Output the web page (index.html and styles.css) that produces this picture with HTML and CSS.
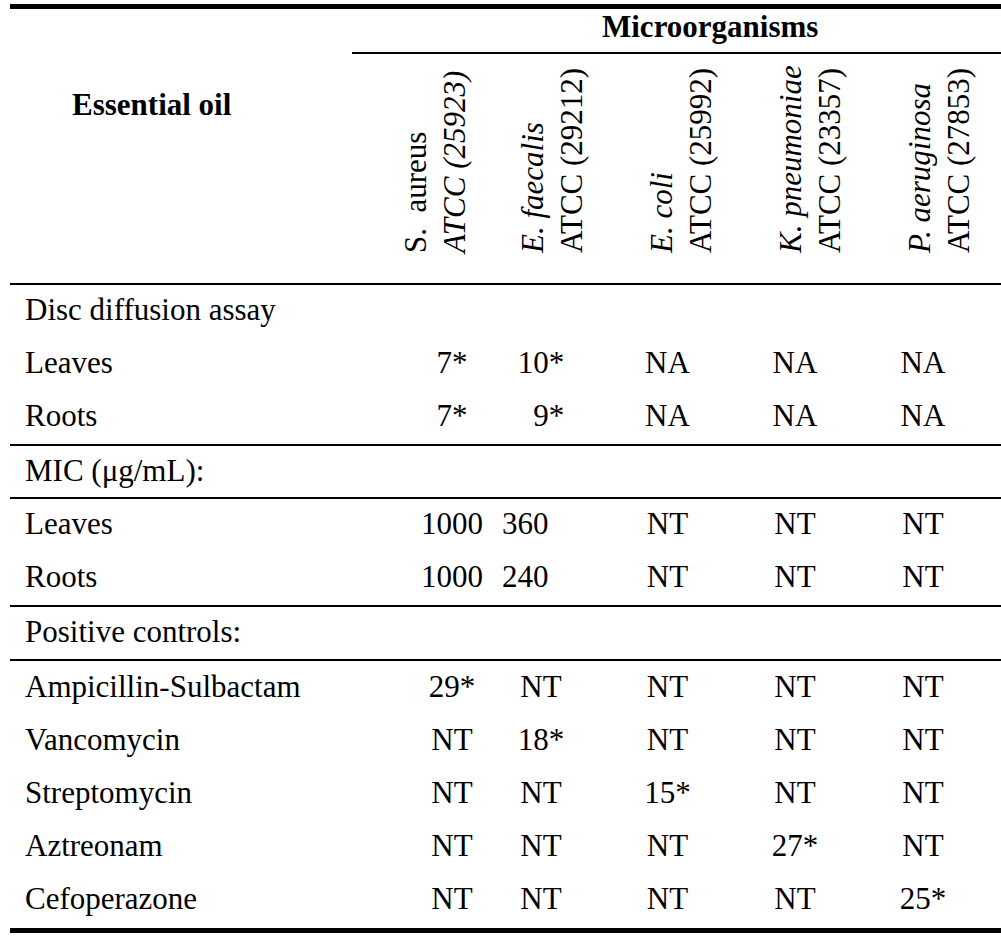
FILE: index.html
```html
<!DOCTYPE html>
<html>
<head>
<meta charset="utf-8">
<link rel="stylesheet" href="styles.css">
</head>
<body>
<div class="tbl">
  <div class="head">
    <div class="eo">Essential oil</div>
    <div class="micro">Microorganisms</div>
    <div class="orgs">
      <div class="org">S.&nbsp; aureus<br><i>ATCC (25923)</i></div>
      <div class="org"><i>E. faecalis</i><br>ATCC (29212)</div>
      <div class="org"><i>E. coli</i><br>ATCC (25992)</div>
      <div class="org"><i>K. pneumoniae</i><br>ATCC (23357)</div>
      <div class="org"><i>P. aeruginosa</i><br>ATCC (27853)</div>
    </div>
  </div>
  <div class="sec">
    <div class="row"><span class="lbl">Disc diffusion assay</span></div>
    <div class="row"><span class="lbl">Leaves</span><span class="c">7*</span><span class="c c2">10*</span><span class="c">NA</span><span class="c">NA</span><span class="c">NA</span></div>
    <div class="row"><span class="lbl">Roots</span><span class="c">7*</span><span class="c c2">&#8199;9*</span><span class="c">NA</span><span class="c">NA</span><span class="c">NA</span></div>
  </div>
  <div class="sec">
    <div class="row r51"><span class="lbl">MIC (μg/mL):</span></div>
  </div>
  <div class="sec">
    <div class="row"><span class="lbl">Leaves</span><span class="c">1000</span><span class="c c2 lft">360</span><span class="c">NT</span><span class="c">NT</span><span class="c">NT</span></div>
    <div class="row"><span class="lbl">Roots</span><span class="c">1000</span><span class="c c2 lft">240</span><span class="c">NT</span><span class="c">NT</span><span class="c">NT</span></div>
  </div>
  <div class="sec">
    <div class="row r52"><span class="lbl">Positive controls:</span></div>
  </div>
  <div class="sec last">
    <div class="row rl"><span class="lbl">Ampicillin-Sulbactam</span><span class="c">29*</span><span class="c c2">NT</span><span class="c">NT</span><span class="c">NT</span><span class="c">NT</span></div>
    <div class="row rl"><span class="lbl">Vancomycin</span><span class="c">NT</span><span class="c c2">18*</span><span class="c">NT</span><span class="c">NT</span><span class="c">NT</span></div>
    <div class="row rl"><span class="lbl">Streptomycin</span><span class="c">NT</span><span class="c c2">NT</span><span class="c">15*</span><span class="c">NT</span><span class="c">NT</span></div>
    <div class="row rl"><span class="lbl">Aztreonam</span><span class="c">NT</span><span class="c c2">NT</span><span class="c">NT</span><span class="c">27*</span><span class="c">NT</span></div>
    <div class="row rl"><span class="lbl">Cefoperazone</span><span class="c">NT</span><span class="c c2">NT</span><span class="c">NT</span><span class="c">NT</span><span class="c">25*</span></div>
  </div>
</div>
</body>
</html>
```
FILE: styles.css
```css
html, body {
  margin: 0;
  padding: 0;
  background: #fff;
}
body {
  font-family: "Liberation Serif", "Times New Roman", serif;
  font-size: 31px;
  color: #000;
}
.tbl {
  margin: 4px 0 0 10px;
  border-top: 5px solid #000;
}
.head {
  display: grid;
  grid-template-columns: 342px 1fr;
  border-bottom: 2px solid #000;
}
.eo {
  grid-column: 1;
  grid-row: 1 / span 2;
  font-weight: bold;
  line-height: 35px;
  padding: 78px 0 0 62px;
  white-space: nowrap;
}
.micro {
  grid-column: 2;
  grid-row: 1;
  font-weight: bold;
  line-height: 35px;
  padding: 0 0 8px 250px;
  border-bottom: 2px solid #000;
}
.orgs {
  grid-column: 2;
  grid-row: 2;
  display: flex;
  align-items: flex-end;
  height: 229px;
  box-sizing: border-box;
  padding: 0 0 30px 44px;
  gap: 51px;
}
.org {
  writing-mode: vertical-rl;
  transform: rotate(180deg);
  height: 196px;
  line-height: 39px;
  white-space: nowrap;
}
.org:first-child {
  margin-right: -12px;
}
.sec {
  border-bottom: 2px solid #000;
}
.sec.last {
  border-bottom-width: 5px;
  padding-bottom: 2px;
}
.row {
  display: grid;
  grid-template-columns: 398px 88px 108px 127px 128px 128px 1fr;
  line-height: 49px;
  padding-bottom: 4px;
}
.row.r51 {
  padding-bottom: 2px;
}
.row.r52 {
  padding-bottom: 3px;
}
.row.rl {
  padding-top: 1px;
  padding-bottom: 3px;
}
.lbl {
  grid-column: 1;
  padding-left: 15px;
  white-space: nowrap;
}
.c {
  text-align: center;
  white-space: nowrap;
}
.c2 {
  padding-right: 18px;
}
.c2.lft {
  text-align: left;
  padding-left: 6px;
  padding-right: 0;
}
```
